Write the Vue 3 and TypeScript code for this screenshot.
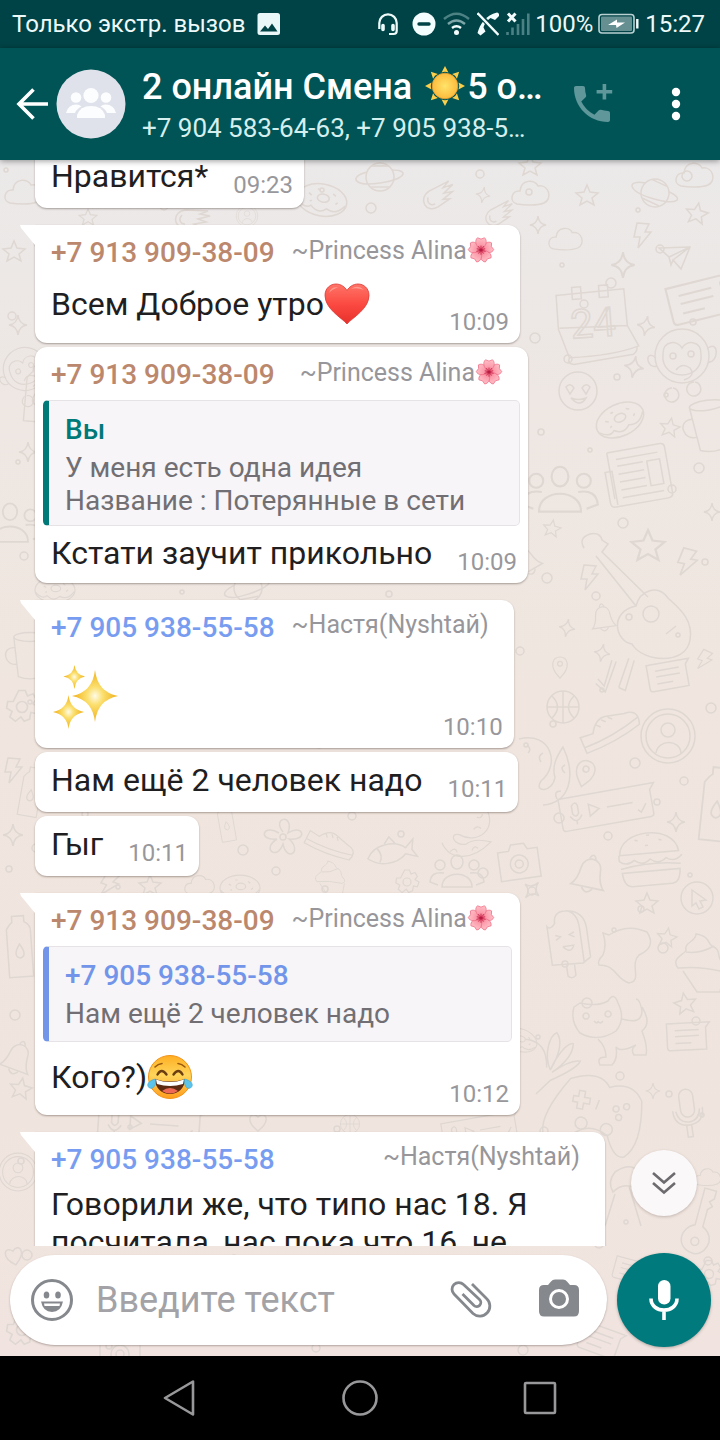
<script setup lang="ts">
import { ref } from 'vue'

type Tone = 'brown' | 'blue' | 'green'
type EmojiName = 'sun' | 'flower' | 'heart' | 'sparkles' | 'joy'

interface Quote {
  author: string
  tone: Tone
  lines: string[]
}

interface Message {
  id: number
  phone?: string
  nick?: string
  nickEmoji?: EmojiName
  tone?: Tone
  first?: boolean
  quote?: Quote
  text: string
  emoji?: EmojiName
  jumbo?: boolean
  time: string
}

const messages: Message[] = [
  { id: 1, text: 'Нравится*', time: '09:23' },
  { id: 2, first: true, phone: '+7 913 909-38-09', nick: '~Princess Alina', nickEmoji: 'flower', tone: 'brown', text: 'Всем Доброе утро', emoji: 'heart', time: '10:09' },
  {
    id: 3,
    phone: '+7 913 909-38-09',
    nick: '~Princess Alina',
    nickEmoji: 'flower',
    tone: 'brown',
    quote: { author: 'Вы', tone: 'green', lines: ['У меня есть одна идея', 'Название : Потерянные в сети'] },
    text: 'Кстати заучит прикольно',
    time: '10:09',
  },
  { id: 4, first: true, phone: '+7 905 938-55-58', nick: '~Настя(Nyshtaй)', tone: 'blue', text: '', emoji: 'sparkles', jumbo: true, time: '10:10' },
  { id: 5, text: 'Нам ещё 2 человек надо', time: '10:11' },
  { id: 6, text: 'Гыг', time: '10:11' },
  {
    id: 7,
    first: true,
    phone: '+7 913 909-38-09',
    nick: '~Princess Alina',
    nickEmoji: 'flower',
    tone: 'brown',
    quote: { author: '+7 905 938-55-58', tone: 'blue', lines: ['Нам ещё 2 человек надо'] },
    text: 'Кого?)',
    emoji: 'joy',
    time: '10:12',
  },
  { id: 8, first: true, phone: '+7 905 938-55-58', nick: '~Настя(Nyshtaй)', tone: 'blue', text: 'Говорили же, что типо нас 18. Я посчитала, нас пока что 16, не', time: '' },
]

const draft = ref('')

/* Wallpaper: [shape, x, y, rotation, scale] */
type Doodle = [string, number, number, number, number]
const doodles: Doodle[] = [
  ['planet', 380, 177, 0, 1], ['planet', 655, 193, 25, 1], ['planet', 248, 588, -10, 1],
  ['cloud', 531, 193, 0, 1], ['cloud', 695, 175, 0, 1], ['cloud', 566, 239, 0, 0.9], ['cloud', 24, 192, 0, 1], ['cloud', 708, 1177, 0, 0.7],
  ['star', 587, 195, 0, 1], ['star', 697, 213, 10, 1], ['star', 670, 427, 10, 0.9], ['star', 648, 545, 0, 1.5], ['star', 552, 528, 10, 0.8],
  ['star', 14, 251, 0, 1], ['star', 647, 903, 0, 1], ['star', 667, 937, 10, 0.9], ['star', 685, 1003, -10, 1], ['star', 21, 1088, 10, 1], ['star', 530, 165, 0, 1],
  ['sparkle', 483, 195, 10, 0.8], ['sparkle', 538, 225, 0, 0.9], ['sparkle', 623, 265, 0, 1.3], ['sparkle', 646, 326, 10, 1],
  ['sparkle', 634, 367, 10, 1.1], ['sparkle', 567, 628, 10, 0.9], ['sparkle', 602, 653, 10, 0.9], ['sparkle', 676, 822, 0, 1],
  ['sparkle', 532, 890, 40, 1], ['sparkle', 653, 1091, 0, 0.8], ['sparkle', 18, 325, 0, 1], ['sparkle', 28, 452, 0, 1], ['sparkle', 13, 835, 0, 1.1], ['sparkle', 712, 512, 0, 0.9],
  ['comet', 437, 197, -30, 1], ['comet', 498, 215, -30, 0.9],
  ['calendar', 593, 322, -4, 1], ['monkey', 682, 360, 0, 1], ['smile', 578, 391, 0, 1],
  ['donut', 620, 420, -25, 1], ['donut', 322, 200, 10, 1], ['news', 637, 475, -10, 1], ['cup', 710, 425, -8, 1],
  ['people', 560, 492, 0, 1.4], ['people', 457, 873, 0, 1],
  ['note', 697, 300, -14, 1.4], ['note', 668, 675, -10, 1], ['note', 687, 1036, -3, 1],
  ['plane', 675, 257, 0, 1], ['bolt', 643, 235, 0, 1], ['bolt', 590, 577, 0, 1], ['bolt', 688, 562, 10, 1.1], ['bolt', 705, 660, 20, 0.8], ['bolt', 14, 770, 0, 1],
  ['guitar', 632, 592, 0, 1], ['bell', 603, 617, -8, 0.8], ['bell', 590, 873, 12, 1.1], ['bell', 18, 1057, 20, 1],
  ['pin', 560, 667, 0, 0.8], ['pin', 585, 773, 15, 1], ['ticks', 615, 678, -10, 1], ['ball', 563, 707, 0, 1], ['shoe', 607, 728, -30, 1],
  ['face', 668, 736, 0, 1], ['voice', 607, 807, -10, 1], ['camera', 519, 862, -8, 1], ['burger', 650, 857, -5, 1], ['cursor', 697, 898, 0, 1],
  ['gear', 407, 882, 0, 0.8], ['gear', 22, 707, 0, 1.1], ['gear', 709, 1274, 0, 0.9], ['fish', 390, 852, -12, 1], ['dino', 545, 775, 0, 1], ['dino', 465, 836, 70, 0.8], ['flower', 283, 837, 0, 1],
  ['ice', 567, 940, -8, 1], ['cupcake', 700, 962, 0, 1], ['blob', 625, 955, 0, 1], ['cat', 610, 1033, 0, 1],
  ['gamepad', 593, 1113, 10, 1], ['mic', 688, 1113, -8, 1], ['leaves', 557, 1055, 10, 1], ['bottle', 20, 953, -4, 1], ['bottle', 30, 797, 10, 0.8],
  ['face', 18, 1172, 0, 0.7], ['key', 700, 1222, 15, 1], ['heart', 14, 1256, -12, 1], ['umbrella', 623, 1190, 0, 1],
  ['bottle', 227, 827, -10, 0.6], ['shoe', 330, 842, 20, 0.8], ['cupcake', 330, 878, 0, 0.6], ['donut', 240, 888, 0, 0.8], ['camera', 120, 1352, 0, 1],
  ['note', 600, 1340, 20, 1], ['note', 630, 1270, 15, 0.8], ['gear', 22, 1330, 0, 1.1], ['donut', 520, 1040, 20, 0.7],
  ['bottle', 716, 812, 6, 1.2],
  ['monkey', 26, 372, -20, 0.8], ['people', 10, 525, 0, 1.2], ['bottle', 36, 400, 5, 0.9], ['cup', 30, 655, 0, 0.9],
  ['star', 88, 217, 0, 0.8], ['face', 247, 216, 0, 0.4], ['comet', 190, 219, 0, 1], ['donut', 55, 590, 0, 0.8], ['voice', 150, 1124, 4, 1.1], ['ball', 350, 1124, 0, 0.6], ['heart', 258, 1122, 0, 1], ['voice', 480, 1130, -10, 0.8],
  ['star', 150, 885, 0, 1], ['bolt', 110, 884, 20, 1], ['cloud', 200, 885, 0, 0.8], ['bell', 525, 560, -30, 0.9],
]

/* Loose bubbles scattered between the drawings. */
const dots = Array.from({ length: 190 }, (_, i) => {
  const col = i % 10
  const row = Math.floor(i / 10)
  return {
    x: col * 72 + ((i * 37 + row * 23) % 60) + 6,
    y: row * 63 + ((i * 53 + col * 17) % 52) + 170,
    r: 2 + ((i * 7 + row) % 4),
  }
})
</script>

<template>
  <div class="phone">
    <svg class="defs" aria-hidden="true">
      <defs>
        <radialGradient id="g-sun"><stop offset="0" stop-color="#ffe46a" /><stop offset="1" stop-color="#fcbb3d" /></radialGradient>
        <linearGradient id="g-heart" x1="0" y1="0" x2="0" y2="1"><stop offset="0" stop-color="#ff7468" /><stop offset="0.5" stop-color="#fb4a41" /><stop offset="1" stop-color="#e7302c" /></linearGradient>
        <radialGradient id="g-spark"><stop offset="0" stop-color="#fffbe8" /><stop offset="0.35" stop-color="#fbdf6e" /><stop offset="1" stop-color="#f0ae14" /></radialGradient>
        <linearGradient id="g-joy" x1="0" y1="0" x2="0" y2="1"><stop offset="0" stop-color="#ffae22" /><stop offset="0.45" stop-color="#ffd55a" /><stop offset="1" stop-color="#ff9d1c" /></linearGradient>
        <radialGradient id="g-petal" gradientUnits="userSpaceOnUse" cx="16" cy="16" r="15"><stop offset="0" stop-color="#e0405f" /><stop offset="0.4" stop-color="#fb9aaa" /><stop offset="1" stop-color="#ffc3c9" /></radialGradient>
        <path id="ray" d="M20 0 L23.400 6.500 Q20 5 16.600 6.500Z" fill="#fbcf4b" />
        <path id="petal" d="M16 16 C9.500 11 8.500 5 12 2 L16 3.500 L20 2 C23.500 5 22.500 11 16 16Z" fill="url(#g-petal)" stroke="#ee6a83" stroke-width="0.8" />
        <symbol id="e-sun" viewBox="0 0 40 40">
          <use v-for="n in 8" :key="n" href="#ray" :transform="`rotate(${n * 45} 20 20)`" />
          <circle cx="20" cy="20" r="12.8" fill="url(#g-sun)" stroke="#e9a02e" stroke-width="0.8" />
        </symbol>
        <symbol id="e-flower" viewBox="0 0 32 32">
          <use v-for="n in 5" :key="n" href="#petal" :transform="`rotate(${n * 72} 16 16)`" />
          <g stroke="#c5284c" stroke-width="0.8"><path v-for="n in 5" :key="n" d="M16 16V10.500" :transform="`rotate(${n * 72 + 36} 16 16)`" /><path v-for="n in 5" :key="-n" d="M16 16V11" :transform="`rotate(${n * 72} 16 16)`" /></g>
          <circle cx="16" cy="16" r="1.800" fill="#b71c44" />
        </symbol>
        <symbol id="e-heart" viewBox="0 0 46 46">
          <path d="M23 43 C18 37 1 28 1 14.500 C1 7 6.500 3 12 3 C17 3 21 6 23 9.500 C25 6 29 3 34 3 C39.500 3 45 7 45 14.500 C45 28 28 37 23 43Z" fill="url(#g-heart)" stroke="#d93732" stroke-width="0.8" />
          <path d="M5 12 Q7 5.500 14 6.500 Q8 8 5 12Z M27 8 Q34 3 40 9 Q33 6 27 8Z" fill="#ffb0a5" opacity="0.7" />
        </symbol>
        <symbol id="e-sparkles" viewBox="0 0 66 66">
          <path d="M42 6 Q44.500 28 65 32 Q44.500 36 42 58 Q39.500 36 19 32 Q39.500 28 42 6Z" fill="url(#g-spark)" />
          <path d="M21.500 1 Q22.500 10.500 32 12.500 Q22.500 14.500 21.500 25 Q20.500 14.500 10.500 12.500 Q20.500 10.500 21.500 1Z" fill="url(#g-spark)" />
          <path d="M15.500 31 Q17 45 31 48 Q17 51 15.500 65 Q14 51 0 48 Q14 45 15.500 31Z" fill="url(#g-spark)" />
        </symbol>
        <symbol id="e-joy" viewBox="0 0 46 46">
          <circle cx="23" cy="23" r="21.500" fill="url(#g-joy)" stroke="#f29317" stroke-width="1" />
          <path d="M8 13 Q11 10 15 9.500 M38 13 Q35 10 31 9.500" fill="none" stroke="#9a5a12" stroke-width="1.600" stroke-linecap="round" />
          <path d="M10.500 20.500 Q14.500 13.500 19.500 20.500 M26.500 20.500 Q31.500 13.500 35.500 20.500" fill="none" stroke="#6b3f12" stroke-width="2.400" stroke-linecap="round" />
          <path d="M8 25 Q23 30 38 25 C38 34 31 40 23 40 C15 40 8 34 8 25Z" fill="#5d2a12" />
          <path d="M9 25.500 Q23 30.500 37 25.500 L36 30 Q23 34 10 30Z" fill="#fff" />
          <path d="M15 37 Q23 31 31 37 Q23 42 15 37Z" fill="#ef6a55" />
          <path d="M8.500 25 C9.500 32 6 35.500 2.500 34 C-1.500 31 1.500 26.500 8.500 25Z M37.500 25 C36.500 32 40 35.500 43.500 34 C47.500 31 44.500 26.500 37.500 25Z" fill="#5cc3ea" stroke="#3aa4d4" stroke-width="0.6" />
        </symbol>
      </defs>
    </svg>

    <div class="status">
      <span>Только экстр. вызов</span>
      <svg class="status-picture" width="24" height="24" viewBox="0 0 24 24"><rect x="0.500" y="1" width="22.500" height="22" rx="2.500" fill="#e9f7f8" /><path d="M3 19.500 L8 13.500 L11 17 L15 11.500 L20.500 19.500Z" fill="#004346" /></svg>
      <span class="grow"></span>
      <svg class="s-headset" width="20" height="24" viewBox="0 0 20 24" fill="none" stroke="#eefafa" stroke-width="2.200"><path d="M1.300 17 V11 A8.700 8.700 0 0 1 18.700 11 V19 Q18.700 22 15.500 22 H11" /><path d="M5 13.500 V17.500 M15 13.500 V17.500" stroke-width="3.600" stroke-linecap="round" /></svg>
      <svg class="s-dnd" width="24" height="24" viewBox="0 0 24 24"><circle cx="12" cy="12" r="11.500" fill="#f4fdfd" /><path d="M7 12 H17" stroke="#004346" stroke-width="3.400" stroke-linecap="round" /></svg>
      <svg class="s-wifi" width="27" height="24" viewBox="0 0 27 24" fill="none" stroke-width="2.400"><path d="M1 7 Q13.500 -3.500 26 7" stroke="#4d8285" /><path d="M5 12 Q13.500 5 22 12" stroke="#7ba5a7" /><path d="M9 16 Q13.500 12.500 18 16" stroke="#f4fdfd" /><circle cx="13.500" cy="20.500" r="2.500" fill="#f4fdfd" /></svg>
      <svg class="s-muted" width="22" height="24" viewBox="0 0 22 24"><path d="M0.500 21 C3 12 9 3 20 0.500 Q22.500 1 22 4 L18 8 L13.500 6 C9 9.500 7.500 12 6.500 15.500 L8.500 19.500 L3.500 23.500Z" fill="#f4fdfd" /><path d="M2 2 L21 22.500" stroke="#004346" stroke-width="5" /><path d="M0.500 1 L21.500 23" stroke="#f4fdfd" stroke-width="2.400" /></svg>
      <svg class="s-signal" width="24" height="24" viewBox="0 0 24 24"><path d="M2 1.500 L9.500 9.500 M9.500 1.500 L2 9.500" stroke="#f4fdfd" stroke-width="3" /><path d="M1.500 20 V23 M6.500 15.500 V23 M12 12 V23 M17 7 V23 M22.300 1.500 V23" stroke="#4b8084" stroke-width="2.600" /></svg>
      <span>100%</span>
      <svg class="s-battery" width="41" height="22" viewBox="0 0 41 22"><rect x="1" y="1.500" width="35" height="18.500" rx="3" fill="#004346" stroke="#b9d0d1" stroke-width="1.600" /><rect x="3" y="3.500" width="31" height="14.500" rx="1" fill="#668f92" /><path d="M39.300 6 V15.500" stroke="#f4fdfd" stroke-width="2.400" /><path d="M10 12 L19 6.500 L19 9.500 L27 9.500 L18.500 15 L18 12Z" fill="#fff" /></svg>
      <span>15:27</span>
    </div>

    <header class="bar">
      <button class="plain" type="button" aria-label="Назад">
        <svg width="32" height="32" viewBox="0 0 32 32" fill="none" stroke="#fff" stroke-width="3.600"><path d="M32 16 H3 M17.500 1.500 L3 16 L17.500 30.500" /></svg>
      </button>
      <svg class="avatar" width="70" height="70" viewBox="0 0 70 70" aria-hidden="true">
        <circle cx="35" cy="35" r="34.500" fill="#dfe2ea" />
        <g fill="#fcfdff"><circle cx="20" cy="28.500" r="5.300" /><circle cx="50" cy="28.500" r="5.300" /><path d="M10 44 Q12 35.500 20.500 35.500 Q23.500 35.500 25.500 37.500 Q20.500 40 19 44Z M60 44 Q58 35.500 49.500 35.500 Q46.500 35.500 44.500 37.500 Q49.500 40 51 44Z" /><circle cx="35" cy="26.500" r="7.600" /><path d="M21 49 V46 Q24 37 35 37 Q46 37 49 46 V49Z" /></g>
      </svg>
      <div class="heading">
        <h1>2 онлайн Смена <svg class="e-title" role="img" aria-label="солнце"><use href="#e-sun" /></svg>5 о…</h1>
        <p>+7 904 583-64-63, +7 905 938-5…</p>
      </div>
      <button class="plain call" type="button" aria-label="Групповой звонок">
        <svg width="48" height="48" viewBox="0 0 24 24" fill="#5f979b"><path d="M20 15.500c-1.250 0-2.450-.2-3.570-.570-.350-.110-.740-.030-1.020.240l-2.200 2.200c-2.830-1.440-5.150-3.750-6.590-6.590l2.200-2.210c.280-.260.360-.650.250-1C8.700 6.450 8.500 5.250 8.500 4c0-.550-.450-1-1-1H4c-.550 0-1 .450-1 1 0 9.390 7.610 17 17 17 .550 0 1-.450 1-1v-3.500c0-.550-.450-1-1-1z" /><path d="M17.300 2h1.800v3h3v1.800h-3v3h-1.800v-3h-3v-1.800h3z" /></svg>
      </button>
      <button class="plain" type="button" aria-label="Ещё">
        <svg width="48" height="48" viewBox="0 0 48 48" fill="#fff"><circle cx="24" cy="12" r="4.200" /><circle cx="24" cy="24" r="4.200" /><circle cx="24" cy="36" r="4.200" /></svg>
      </button>
    </header>

    <main class="chat">
      <svg class="wallpaper" viewBox="0 160 720 1196" preserveAspectRatio="xMidYMid slice" aria-hidden="true">
        <defs>
          <g id="d-planet"><circle r="14" /><path d="M-13 -5 C-32 0 -26 10 0 6 C26 2 30 -7 12 -7" /><path d="M-8 -11 H8 M-9 10 H9" /></g>
          <path id="d-cloud" d="M-14 11 C-22 9 -20 -3 -11 -2 C-10 -14 4 -14 7 -7 C18 -9 22 6 13 10 C6 13 -8 12 -14 11Z" />
          <path id="d-star" d="M0 -10 L3 -3 L11 -2 L5 3 L7 10 L0 6 L-7 10 L-5 3 L-11 -2 L-3 -3Z" />
          <path id="d-sparkle" d="M0 -10 Q1 -1 9 0 Q1 1 0 10 Q-1 1 -9 0 Q-1 -1 0 -10Z" />
          <path id="d-comet" d="M18 -8 L-4 -9 C-18 -8 -18 9 -4 9 L10 8 L4 5 L16 3 L8 0 L20 -3 L10 -5Z M-8 -4 C-12 0 -10 5 -5 5" />
          <g id="d-calendar"><path d="M-35 -29 L33 -31 L34 6 L44 27 Q18 35 -26 34 L-35 5Z M-26 34 Q-29 40 -22 41 L38 35 Q43 32 42 27 M-34 4 L34 6" /><path d="M-19 -36 H-10 V-24 H-19Z M8 -36 H17 V-24 H8Z" /><text x="0" y="15" font-size="40" text-anchor="middle">24</text></g>
          <g id="d-monkey"><circle cy="-4" r="27" /><path d="M-19 -6 C-19 -20 -4 -20 0 -12 C4 -20 19 -20 19 -6 C22 22 -22 22 -19 -6Z M-26 -2 C-38 -12 -36 10 -25 6 M26 -12 C38 -20 36 4 26 2" /><circle cx="-9" cy="-4" r="3" /><circle cx="9" cy="-6" r="3" /><path d="M-6 10 Q0 2 8 8 Q14 16 2 20 M-10 28 a7 7 0 1 0 1 .1 M12 22 a7 7 0 1 0 1 .1" /></g>
          <g id="d-smile"><circle r="19" /><path d="M-12 -4 Q-8 -9 -4 -3 L-8 3Z M4 -3 Q8 -9 12 -4 L8 3Z M-7 7 Q0 10 8 7 Q2 17 -7 7Z" /></g>
          <g id="d-donut"><ellipse rx="25" ry="16" /><ellipse cx="1" cy="-2" rx="6" ry="4" /><path d="M-24 3 Q-16 12 -10 7 Q-2 15 6 8 Q16 13 24 2 M-14 -5 L-11 -3 M-6 -10 L-3 -10 M10 -8 L13 -6 M14 2 L16 0 M-12 3 L-10 2" /></g>
          <g id="d-news"><path d="M-26 -27 H28 Q32 -27 32 -23 V23 Q32 28 27 28 H-26 Q-31 28 -31 23 V-8 H-24 V26 M-26 -27 V20 M-18 -19 H24 M-18 -12 H8 M-18 -4 H8 M-18 4 H8 M-18 12 H8 M-18 20 H24 M12 -12 H25 V13 H12Z" /></g>
          <g id="d-cup"><ellipse cy="-20" rx="18" ry="5" /><path d="M-18 -20 L-13 24 Q0 29 13 24 L18 -20 M-16 -8 C-34 -10 -28 14 -14 10" /></g>
          <g id="d-people"><ellipse cx="0" cy="-11" rx="6" ry="7" /><circle cx="-17" cy="-8" r="5" /><circle cx="17" cy="-8" r="5" /><path d="M-15 14 C-15 -3 15 -3 15 14Z M-19 12 L-27 9 Q-26 -2 -13 0 M19 12 L27 9 Q26 -2 13 0" /></g>
          <path id="d-note" d="M-20 -13 H23 L19 -8 V14 H-17 Q-20 14 -20 11Z M-12 -6 H12 M-12 0 H12 M-12 7 H4" />
          <path id="d-plane" d="M-16 -9 L15 -10 L6 12 L-2 3 L-4 8 L-6 0Z M-6 0 L15 -10 L-2 3" />
          <path id="d-bolt" d="M-6 -12 L6 -11 L2 -3 H8 L-5 13 L-3 2 H-9Z" />
          <g id="d-guitar"><path d="M-48 -44 q-6 -10 6 -14 q10 -2 12 6 l6 4 l-6 8 L16 5 M-36 -36 L4 14" /><path d="M4 14 C-24 20 -16 50 0 52 C10 70 54 74 58 48 C62 26 44 14 36 6 C26 -8 8 -2 4 14Z" /><circle cx="19" cy="22" r="8" /><path d="M34 42 l10 -8" /></g>
          <path id="d-bell" d="M-15 13 Q-10 8 -9 -3 C-8 -16 9 -16 9 -3 Q10 8 15 13Z M-5 14 Q0 21 5 14 M-3 -13 Q0 -20 3 -13" />
          <g id="d-pin"><path d="M0 14 C-6 7 -10 2 -9 -5 C-7 -15 7 -15 9 -5 C10 2 6 7 0 14Z" /><circle cy="-4" r="3" /></g>
          <path id="d-ticks" d="M-20 2 L-12 12 L4 -16 M-17 -2 L-12 6 L0 -18 M2 10 L8 14 L22 -14 M2 10 L17 -17" />
          <path id="d-ball" d="M16 0 A16 16 0 1 1 -16 0 A16 16 0 1 1 16 0 M-16 0 H16 M0 -16 V16 M-11 -11 Q0 0 -11 11 M11 -11 Q0 0 11 11" />
          <path id="d-shoe" d="M-30 12 L-28 -5 L-15 -2 Q-6 -14 4 -11 L22 -4 Q34 -2 32 8 L30 13 Q0 17 -30 12Z M-29 6 Q0 11 32 6 M-8 -8 l3 4 M-1 -10 l3 4 M6 -9 l3 4" />
          <g id="d-face"><circle r="27" /><circle r="22" /><circle cy="-6" r="7" /><path d="M-12 17 C-10 3 12 3 13 17" /></g>
          <path id="d-voice" d="M-47 -16 H50 L45 -10 V14 Q45 17 42 17 H-44 Q-47 17 -47 14Z M-35 -7 q4 -5 6 0 v8 q-3 5 -6 0Z M-38 3 Q-32 13 -26 3 M-32 8 V12 M-18 -6 L-8 0 L-18 6Z M0 0 H26 M30 8 l3 3 l6 -8" />
          <g id="d-camera"><path d="M-20 -12 H-9 L-6 -18 H7 L10 -12 H20 V17 H-20Z" /><circle cy="2" r="9" /><circle cy="2" r="4" /></g>
          <path id="d-burger" d="M-30 -4 C-29 -30 26 -32 29 -4Z M-31 2 Q-24 8 -16 2 Q-8 9 0 2 Q8 9 16 2 Q24 8 32 0 M-31 2 V-4 M-30 10 Q0 4 30 9 M-29 14 Q-28 28 -20 28 H20 Q28 28 29 14Z M-14 -18 l3 1 M-2 -22 l3 0 M10 -17 l3 1 M-4 -12 l3 0" />
          <g id="d-cursor"><circle r="16" /><path d="M-5 -8 L9 2 L3 3 L6 9 L2 11 L-1 5 L-5 8Z" /></g>
          <g id="d-gear"><path d="M-3 -15 H3 L5 -10 L10 -12 L13 -7 L10 -3 L15 0 L13 6 L8 5 L7 11 L2 13 L-1 9 L-6 13 L-11 9 L-9 4 L-14 1 L-13 -5 L-8 -5Z" /><circle r="5" /></g>
          <path id="d-fish" d="M-23 2 C-14 -12 8 -10 16 -1 L25 -8 L22 2 L26 10 L15 5 C4 14 -14 12 -23 2Z M-12 -6 Q-7 2 -12 8 M-4 -9 L2 -15 L7 -7" />
          <path id="d-dino" d="M-26 -36 C6 -44 16 -10 -4 6 C-12 18 8 18 10 2 C6 -10 14 -22 18 -28 C32 2 24 28 -2 30 M-18 -30 q5 4 1 8 M-2 -22 q-6 3 -2 9 M20 -10 q-6 3 0 8 M16 16 q-8 0 -4 8" />
          <g id="d-flower"><path d="M0 -5 C-12 -20 12 -24 5 -4 C20 -14 26 4 6 2 C20 14 4 26 0 7 C-6 24 -22 12 -6 2 C-26 4 -20 -14 -4 -4" /><circle r="3" /></g>
          <path id="d-ice" d="M-18 23 V-16 Q-15 -12 -10 -18 Q-10 -30 2 -29 Q20 -28 21 -10 V20 L13 25Z M3 -29 Q14 -26 14 -10 V25 M-4 25 V36 Q0 40 4 36 V25 M-11 -6 l5 2 l-5 3 M8 -7 l-5 2 l5 3 M-5 6 H6 Q2 15 -5 6" />
          <path id="d-cupcake" d="M-22 6 C-30 -4 -14 -8 -14 -12 C-16 -20 -4 -20 -4 -28 C10 -26 8 -18 12 -16 C22 -12 16 -6 22 0 Q28 6 20 9 Q0 4 -22 6Z M-14 -10 Q0 -8 14 -16 M-17 9 L-3 30 H20 L24 9" />
          <path id="d-blob" d="M-22 -22 L-16 -20 Q2 -32 22 -23 Q32 -8 14 0 C4 10 18 26 4 28 C-10 24 -8 10 -26 10 Q-28 6 -22 0 Q-18 -10 -22 -22Z" />
          <path id="d-cat" d="M-36 -26 L-30 -30 Q-12 -26 -2 -32 Q4 -42 8 -30 Q16 -14 6 -2 Q-12 10 -30 0 Q-40 -12 -36 -26Z M12 -14 Q32 -8 32 -22 Q30 -34 26 -34 M32 -26 Q42 -10 32 -2 Q38 14 36 22 H24 Q20 16 26 12 M26 12 Q10 20 6 14 Q8 26 2 32 H-10 Q-14 24 -4 24 Q-4 14 -12 6 M-16 -12 q4 4 4 0 q2 4 5 0 M-24 -20 a3 3 0 1 0 .1 0 M-2 -22 a3 3 0 1 0 .1 0" />
          <g id="d-gamepad"><path d="M-28 -30 Q0 -44 12 -28 Q34 -38 46 -20 Q54 24 38 38 Q28 42 18 20 Q0 10 -14 22 Q-36 46 -46 28 Q-52 10 -28 -30Z" /><circle cx="22" cy="-8" r="3" /><circle cx="32" cy="-12" r="3" /><circle cx="26" cy="0" r="3" /><circle cx="-10" cy="12" r="6" /><circle cx="16" cy="14" r="6" /><path d="M-22 -14 h5 v-6 h6 v6 h6 v6 h-6 v6 h-6 v-6 h-5Z M4 -14 L2 -4" /></g>
          <g id="d-mic"><rect x="-7" y="-24" width="14" height="28" rx="7" /><path d="M-15 -4 Q-15 12 0 12 Q15 12 15 -4 M-3 12 V24 H2 V12 M-12 -3 Q-10 9 0 9 Q10 9 12 -3" /></g>
          <path id="d-leaves" d="M-4 16 C-14 0 -10 -18 -4 -22 C4 -14 2 0 -4 16 C0 0 8 -14 14 -14 C16 -4 8 8 -2 18 Q14 2 24 2 Q22 10 -2 26 L-14 42 M-34 -10 Q-12 -12 -8 14" />
          <path id="d-bottle" d="M-12 -24 Q-8 -30 -6 -31 V-37 H6 V-31 Q12 -28 12 -22 V24 H-12Z M0 -9 Q-8 3 0 5 Q8 3 0 -9Z" />
          <g id="d-key"><path d="M-4 4 V-34 H8 V-26 L4 -22 L8 -18 L4 -14 V4 C22 12 12 34 0 32 C-18 30 -18 10 -4 4Z" /><circle cy="20" r="4" /></g>
          <path id="d-heart" d="M0 9 C-14 -2 -7 -12 0 -5 C7 -12 14 -2 0 9Z" />
          <path id="d-umbrella" d="M-8 -18 Q14 -32 20 -8 L12 -2 Q0 -8 -10 2 Q-16 -8 -8 -18Z M-8 4 L-18 36 M6 -4 L18 36" />
        </defs>
        <g class="ink">
          <circle v-for="(d, i) in dots" :key="`c${i}`" :cx="d.x" :cy="d.y" :r="d.r" />
          <use v-for="(d, i) in doodles" :key="`d${i}`" :href="`#d-${d[0]}`" :transform="`translate(${d[1]} ${d[2]}) rotate(${d[3]}) scale(${d[4]})`" />
        </g>
      </svg>

      <section class="feed" aria-label="Сообщения">
        <ol class="list">
          <li v-for="m in messages" :key="m.id" :class="['bubble', { first: m.first, named: m.phone, quoted: m.quote, jumbo: m.jumbo, withemoji: m.emoji }]">
            <div v-if="m.phone" class="who">
              <span :class="['tel', m.tone]">{{ m.phone }}</span>
              <span class="nick">{{ m.nick }}<svg v-if="m.nickEmoji" class="e-nick" role="img" aria-label="цветок"><use :href="`#e-${m.nickEmoji}`" /></svg></span>
            </div>
            <blockquote v-if="m.quote" :class="['quote', m.quote.tone]">
              <strong>{{ m.quote.author }}</strong>
              <span v-for="line in m.quote.lines" :key="line">{{ line }}</span>
            </blockquote>
            <div class="body">
              <p>{{ m.text }}<svg v-if="m.emoji" class="e-text" role="img" :aria-label="m.emoji"><use :href="`#e-${m.emoji}`" /></svg></p>
              <time v-if="m.time">{{ m.time }}</time>
            </div>
          </li>
        </ol>
        <button class="down" type="button" aria-label="Вниз">
          <svg width="24" height="24" viewBox="0 0 24 24" fill="none" stroke="#6d6b6e" stroke-width="2.600"><path d="M1 2 L12 11.500 L23 2 M1 12 L12 21.500 L23 12" /></svg>
        </button>
      </section>

      <form class="composer" @submit.prevent>
        <div class="field">
          <button class="plain" type="button" aria-label="Эмодзи">
            <svg width="42" height="42" viewBox="0 0 42 42" fill="#85888d"><circle cx="21" cy="21" r="19.500" fill="none" stroke="#85888d" stroke-width="3" /><ellipse cx="15.500" cy="16" rx="2.800" ry="3.500" /><ellipse cx="27" cy="16" rx="2.800" ry="3.500" /><path d="M10 22.500 H32 Q30 33 21 33 Q12 33 10 22.500Z" /><path d="M13 24.500 H29 L28.500 27 H13.500Z" fill="#fff" /></svg>
          </button>
          <input v-model="draft" type="text" placeholder="Введите текст" aria-label="Введите текст" />
          <button class="plain clip" type="button" aria-label="Прикрепить">
            <svg width="42" height="38" viewBox="0 0 42 38" fill="none" stroke="#85888d" stroke-width="2.800"><path d="M22 3 L36.500 17.500 A9.700 9.700 0 0 1 23 32.500 L4 13 A6.600 6.600 0 0 1 13.500 3.500 L29.500 18.500 A3.800 3.800 0 0 1 24 24.500 L12.500 13" /></svg>
          </button>
          <button class="plain" type="button" aria-label="Камера">
            <svg width="40" height="42" viewBox="0 0 40 42" fill="#85888d"><path d="M5 6 H9 L12 2.500 Q13.500 0.500 16 0.500 H24 Q26.500 0.500 28 2.500 L31 6 H35 Q40 6 40 11 V32 Q40 37.500 35 37.500 H5 Q0 37.500 0 32 V11 Q0 6 5 6Z" /><circle cx="20" cy="20" r="8.500" fill="none" stroke="#fff" stroke-width="3" /></svg>
          </button>
        </div>
        <button class="voice" type="button" aria-label="Голосовое сообщение">
          <svg width="30" height="42" viewBox="0 0 30 42"><rect x="9" y="1" width="12.500" height="24.500" rx="6.250" fill="#fff" /><path d="M2 19.500 C2 35 28 35 28 19.500 M15 31 V41" fill="none" stroke="#fff" stroke-width="3.600" /></svg>
        </button>
      </form>
    </main>

    <nav class="nav" aria-label="Система">
      <button class="plain" type="button" aria-label="Назад"><svg width="36" height="36" viewBox="0 0 36 36"><path d="M3 18 L31 1.500 V34.500Z" /></svg></button>
      <button class="plain" type="button" aria-label="Домой"><svg width="36" height="36" viewBox="0 0 36 36"><circle cx="18" cy="18" r="16.500" /></svg></button>
      <button class="plain" type="button" aria-label="Недавние"><svg width="36" height="36" viewBox="0 0 36 36"><rect x="3" y="3" width="30" height="30" rx="1" /></svg></button>
    </nav>
  </div>
</template>

<style>
body {
  margin: 0;
}
</style>

<style scoped>
* {
  box-sizing: border-box;
}
.phone {
  display: flex;
  flex-direction: column;
  height: 100vh;
  font-family: Roboto, "Noto Sans", sans-serif;
  background: #000;
}
svg {
  flex: none;
  display: block;
}
.defs {
  position: absolute;
  width: 0;
  height: 0;
}
.plain {
  flex: none;
  padding: 0;
  border: 0;
  background: none;
}
.status {
  flex: none;
  display: flex;
  align-items: center;
  height: 48px;
  padding: 0 15px 0 12px;
  background: #004346;
  color: #eefafa;
  font-size: 24px;
  line-height: 28px;
  white-space: nowrap;
}
.grow {
  flex: 1;
}
.status-picture {
  margin-left: 12px;
}
.s-headset {
  margin-right: 14px;
}
.s-dnd,
.s-wifi,
.s-muted {
  margin-right: 7px;
}
.s-signal {
  margin-right: 5px;
}
.s-battery {
  margin: 0 6px 0 5px;
}
.bar {
  position: relative;
  z-index: 1;
  flex: none;
  display: flex;
  align-items: center;
  height: 112px;
  padding: 0 20px 0 16px;
  background: #005455;
  color: #fff;
  box-shadow: 0 1px 6px rgba(0, 0, 0, 0.4);
}
.avatar {
  margin: 0 16px 0 8px;
}
.heading {
  flex: 1;
  min-width: 0;
  white-space: nowrap;
  overflow: hidden;
}
h1 {
  margin: 0 0 5px;
  font-size: 36px;
  line-height: 42px;
  font-weight: 500;
}
.heading p {
  margin: 0;
  font-size: 26px;
  line-height: 30px;
  color: #d5efef;
}
.e-title {
  display: inline-block;
  width: 40px;
  height: 40px;
  margin: 0 2px 0 4px;
  vertical-align: -7px;
}
.call {
  margin-right: 36px;
}
.chat {
  position: relative;
  flex: 1;
  min-height: 0;
  display: flex;
  flex-direction: column;
  overflow: hidden;
  background: linear-gradient(#ebe9e9, #eee7e3 20%, #f0e6df 45%, #f0e5de 80%, #f1e4e0);
}
.wallpaper {
  position: absolute;
  inset: 0;
  width: 100%;
  height: 100%;
}
.ink {
  fill: none;
  stroke: #dfd7d2;
  stroke-width: 1.5px;
}
.feed {
  position: relative;
  flex: 1;
  min-height: 0;
  overflow: hidden;
}
.list {
  display: flex;
  flex-direction: column;
  align-items: flex-start;
  gap: 4px;
  margin: -12px 0 0;
  padding: 0 0 0 35px;
  list-style: none;
}
.bubble {
  position: relative;
  max-width: calc(100% - 115px);
  border-radius: 12px;
  background: #fff;
  box-shadow: 0 1px 2px rgba(60, 45, 40, 0.4);
}
.bubble.first {
  margin-top: 13px;
  border-top-left-radius: 0;
}
.bubble.first::before {
  content: "";
  position: absolute;
  top: 0;
  left: -15px;
  width: 16px;
  height: 22px;
  background: #fff;
  clip-path: polygon(0 0, 100% 0, 100% 100%, 15px 20px, 1px 3px);
}
.who {
  display: flex;
  justify-content: space-between;
  gap: 17px;
  padding: 11px 25px 0 16px;
  white-space: nowrap;
}
.tel {
  font-size: 28px;
  line-height: 33px;
  font-weight: 500;
}
.tel.brown {
  color: #bc886d;
}
.tel.blue {
  color: #789df0;
}
.nick {
  font-size: 25px;
  line-height: 28px;
  color: #97969a;
}
.e-nick {
  display: inline-block;
  width: 28px;
  height: 28px;
  vertical-align: -5px;
}
.quote {
  display: flex;
  flex-direction: column;
  min-height: 96px;
  margin: 9px 8px 0;
  padding: 12px 16px 8px 16px;
  border: 1px solid #e6e3e7;
  border-left: 6px solid;
  border-radius: 5px;
  background: #f7f5f8;
  font-size: 28px;
  line-height: 33px;
  white-space: nowrap;
}
.quote.green {
  border-left-color: #007a78;
}
.quote.blue {
  border-left-color: #7295ea;
}
.quote strong {
  margin-bottom: 5px;
  font-weight: 500;
}
.quote.green strong {
  color: #007a78;
}
.quote.blue strong {
  color: #7295ea;
}
.quote span {
  color: #716f73;
}
.body {
  display: flex;
  justify-content: space-between;
  align-items: flex-end;
  gap: 25px;
  padding: 9px 11px 0 16px;
}
.body p {
  margin: 0 0 13px;
  font-size: 32px;
  line-height: 38px;
  color: #1f1e21;
}
.quoted .body {
  padding-top: 8px;
}
.quoted .body p {
  margin-bottom: 11px;
}
.withemoji .body {
  padding-top: 8px;
}
.withemoji .body p {
  margin-bottom: 12px;
  line-height: 54px;
  white-space: nowrap;
}
.withemoji.quoted .body p {
  margin-bottom: 11px;
}
.e-text {
  display: inline-block;
  width: 46px;
  height: 46px;
  vertical-align: -12px;
}
.jumbo .body {
  padding-top: 20px;
}
.jumbo .body p {
  margin: 0 0 18px 2px;
}
.jumbo .e-text {
  display: block;
  width: 66px;
  height: 66px;
}
time {
  flex: none;
  margin-bottom: 9px;
  font-size: 24px;
  line-height: 28px;
  color: #98979b;
}
.named time {
  margin-bottom: 7px;
}
.down {
  position: absolute;
  right: 23px;
  bottom: 30px;
  display: grid;
  place-items: center;
  width: 66px;
  height: 66px;
  padding: 0;
  border: 0;
  border-radius: 50%;
  background: #fbf8fa;
  box-shadow: 0 1px 3px rgba(60, 45, 40, 0.25);
}
.composer {
  position: relative;
  flex: none;
  display: flex;
  align-items: center;
  gap: 10px;
  padding: 7px 9px 9px 10px;
}
.field {
  flex: 1;
  min-width: 0;
  display: flex;
  align-items: center;
  height: 90px;
  padding: 0 28px 0 21px;
  border-radius: 45px;
  background: #fff;
  box-shadow: 0 1px 2px rgba(60, 45, 40, 0.35);
}
input {
  flex: 1;
  min-width: 0;
  margin-left: 23px;
  padding: 0;
  border: 0;
  outline: 0;
  background: none;
  font: 36px/42px Roboto, "Noto Sans", sans-serif;
  color: #1f1e21;
}
input::placeholder {
  color: #a3a2a6;
  opacity: 1;
}
.clip {
  margin-right: 47px;
}
.voice {
  flex: none;
  display: grid;
  place-items: center;
  width: 94px;
  height: 94px;
  padding: 0;
  border: 0;
  border-radius: 50%;
  background: #007a7c;
  box-shadow: 0 1px 3px rgba(60, 45, 40, 0.35);
}
.nav {
  flex: none;
  display: grid;
  grid-template-columns: repeat(3, 1fr);
  place-items: center;
  height: 84px;
  padding: 0 12.5%;
  background: #000;
}
.nav svg {
  fill: none;
  stroke: #98979a;
  stroke-width: 2.6px;
  stroke-linejoin: round;
}
</style>
